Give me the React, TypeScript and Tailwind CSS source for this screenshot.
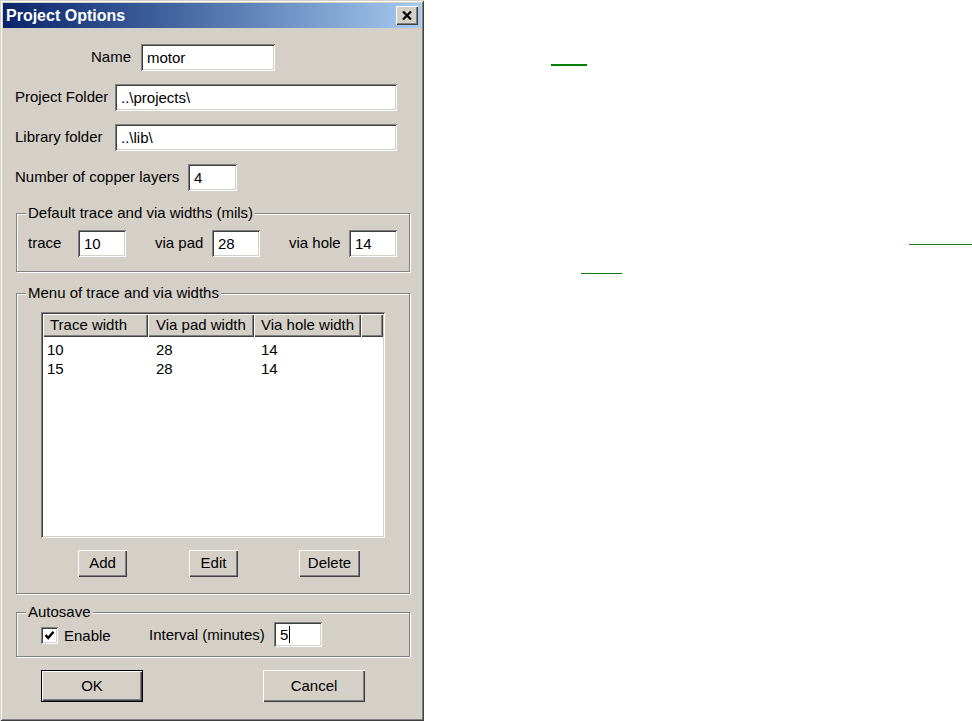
import React from "react";

const sunken =
  "bg-white shadow-[inset_1px_1px_0_#808080,inset_-1px_-1px_0_#ffffff,inset_2px_2px_0_#404040,inset_-2px_-2px_0_#d4d0c8]";
const raised =
  "bg-[#d4d0c8] shadow-[inset_1px_1px_0_#ffffff,inset_-1px_-1px_0_#404040,inset_-2px_-2px_0_#808080]";
const etched =
  "relative border border-[#808080] shadow-[1px_1px_0_#ffffff,inset_1px_1px_0_#ffffff]";

function Input({ value, w, h = 27, caret = false }: { value: string; w: number; h?: number; caret?: boolean }) {
  return (
    <div
      className={`${sunken} flex items-center pl-[6px] shrink-0`}
      style={{ width: w, height: h }}
    >
      <span className="leading-none">{value}</span>
      {caret && <span className="w-px h-[17px] bg-black ml-px" />}
    </div>
  );
}

function Button({ label, w, h = 27, def = false }: { label: string; w: number; h?: number; def?: boolean }) {
  if (def) {
    return (
      <div className="border border-black shrink-0" style={{ width: w, height: h }}>
        <div className={`${raised} w-full h-full flex items-center justify-center`}>{label}</div>
      </div>
    );
  }
  return (
    <div className={`${raised} flex items-center justify-center shrink-0`} style={{ width: w, height: h }}>
      {label}
    </div>
  );
}

function GroupLabel({ text }: { text: string }) {
  return (
    <span className="absolute left-[9px] top-[-10px] px-[2px] bg-[#d4d0c8] leading-[18px]">{text}</span>
  );
}

export default function App() {
  return (
    <div className="flex w-[972px] h-[721px] bg-white font-['Liberation_Sans',Arial,sans-serif] text-[15px] text-black overflow-hidden">
      <div className="w-[424px] h-[721px] shrink-0 bg-[#d4d0c8] shadow-[inset_1px_1px_0_#d4d0c8,inset_-1px_-1px_0_#404040,inset_2px_2px_0_#ffffff,inset_-2px_-2px_0_#808080] flex flex-col">
        {/* Title bar */}
        <div className="mx-[3px] mt-[3px] h-[25px] bg-gradient-to-r from-[#0a246a] to-[#a6caf0] flex items-center pl-[3px]">
          <span className="text-white font-bold text-[16px] leading-none">Project Options</span>
          <div className={`${raised} ml-auto mr-[3px] w-[22px] h-[19px] flex items-center justify-center`}>
            <svg width="10" height="9" viewBox="0 0 10 9">
              <path d="M1 0.5 L9 8.5 M9 0.5 L1 8.5" stroke="#000" strokeWidth="2.2" />
            </svg>
          </div>
        </div>

        {/* Name */}
        <div className="flex items-center mt-[16px]">
          <span className="w-[131px] text-right">Name</span>
          <div className="ml-[10px]">
            <Input value="motor" w={134} />
          </div>
        </div>

        {/* Project folder */}
        <div className="flex items-center mt-[13px] pl-[15px]">
          <span className="w-[100px]">Project Folder</span>
          <Input value="..\projects\" w={282} />
        </div>

        {/* Library folder */}
        <div className="flex items-center mt-[13px] pl-[15px]">
          <span className="w-[100px]">Library folder</span>
          <Input value="..\lib\" w={282} />
        </div>

        {/* Copper layers */}
        <div className="flex items-center mt-[13px] pl-[15px]">
          <span className="w-[173px]">Number of copper layers</span>
          <Input value="4" w={49} />
        </div>

        {/* Default widths group */}
        <div className={`${etched} ml-[16px] w-[394px] h-[59px] mt-[22px] shrink-0`}>
          <GroupLabel text="Default trace and via widths (mils)" />
          <div className="flex items-center pt-[16px] pl-[11px]">
            <span className="w-[50px]">trace</span>
            <Input value="10" w={48} />
            <span className="ml-[29px] w-[57px]">via pad</span>
            <Input value="28" w={48} />
            <span className="ml-[29px] w-[60px]">via hole</span>
            <Input value="14" w={48} />
          </div>
        </div>

        {/* Menu group */}
        <div className={`${etched} ml-[16px] w-[394px] h-[301px] mt-[21px] shrink-0`}>
          <GroupLabel text="Menu of trace and via widths" />
          <div className="pl-[24px] pt-[18px]">
            <div className={`${sunken} w-[344px] h-[226px] p-[2px] flex flex-col`}>
              <div className="flex h-[23px] shrink-0">
                <div className={`${raised} w-[105px] flex items-center pl-[7px]`}>Trace width</div>
                <div className={`${raised} w-[106px] flex items-center pl-[8px]`}>Via pad width</div>
                <div className={`${raised} w-[107px] flex items-center pl-[7px]`}>Via hole width</div>
                <div className={`${raised} w-[22px]`} />
              </div>
              <div className="flex flex-col pt-[4px]">
                {[
                  ["10", "28", "14"],
                  ["15", "28", "14"],
                ].map((r, i) => (
                  <div key={i} className="flex h-[19px] items-center">
                    <span className="w-[113px] pl-[4px]">{r[0]}</span>
                    <span className="w-[105px]">{r[1]}</span>
                    <span>{r[2]}</span>
                  </div>
                ))}
              </div>
            </div>
          </div>
          <div className="flex mt-[12px] pl-[61px]">
            <Button label="Add" w={49} />
            <div className="ml-[62px]">
              <Button label="Edit" w={49} />
            </div>
            <div className="ml-[61px]">
              <Button label="Delete" w={61} />
            </div>
          </div>
        </div>

        {/* Autosave group */}
        <div className={`${etched} ml-[16px] w-[394px] h-[45px] mt-[18px] shrink-0`}>
          <GroupLabel text="Autosave" />
          <div className="flex items-center pt-[9px] pl-[24px]">
            <div className={`${sunken} w-[17px] h-[17px] flex items-center justify-center mt-[2px]`}>
              <svg width="11" height="11" viewBox="0 0 11 11">
                <path d="M1.5 5 L4.2 8 L9.5 1.8" stroke="#000" strokeWidth="2.4" fill="none" />
              </svg>
            </div>
            <span className="ml-[6px] w-[85px] mt-[3px]">Enable</span>
            <span className="w-[125px]">Interval (minutes)</span>
            <Input value="5" w={48} h={25} caret />
          </div>
        </div>

        {/* OK / Cancel */}
        <div className="flex mt-[13px] pl-[41px]">
          <Button label="OK" w={102} h={32} def />
          <div className="ml-[120px]">
            <Button label="Cancel" w={102} h={32} />
          </div>
        </div>
      </div>

      {/* Right side */}
      <div className="flex-1 flex flex-col">
        <div className="mt-[64px] ml-[127px] w-[36px] h-[2px] bg-[#008000]" />
        <div className="mt-[178px] ml-[485px] w-[63px] h-px bg-[#1a7a1a]" />
        <div className="mt-[28px] ml-[157px] w-[41px] h-px bg-[#0a800a]" />
      </div>
    </div>
  );
}
